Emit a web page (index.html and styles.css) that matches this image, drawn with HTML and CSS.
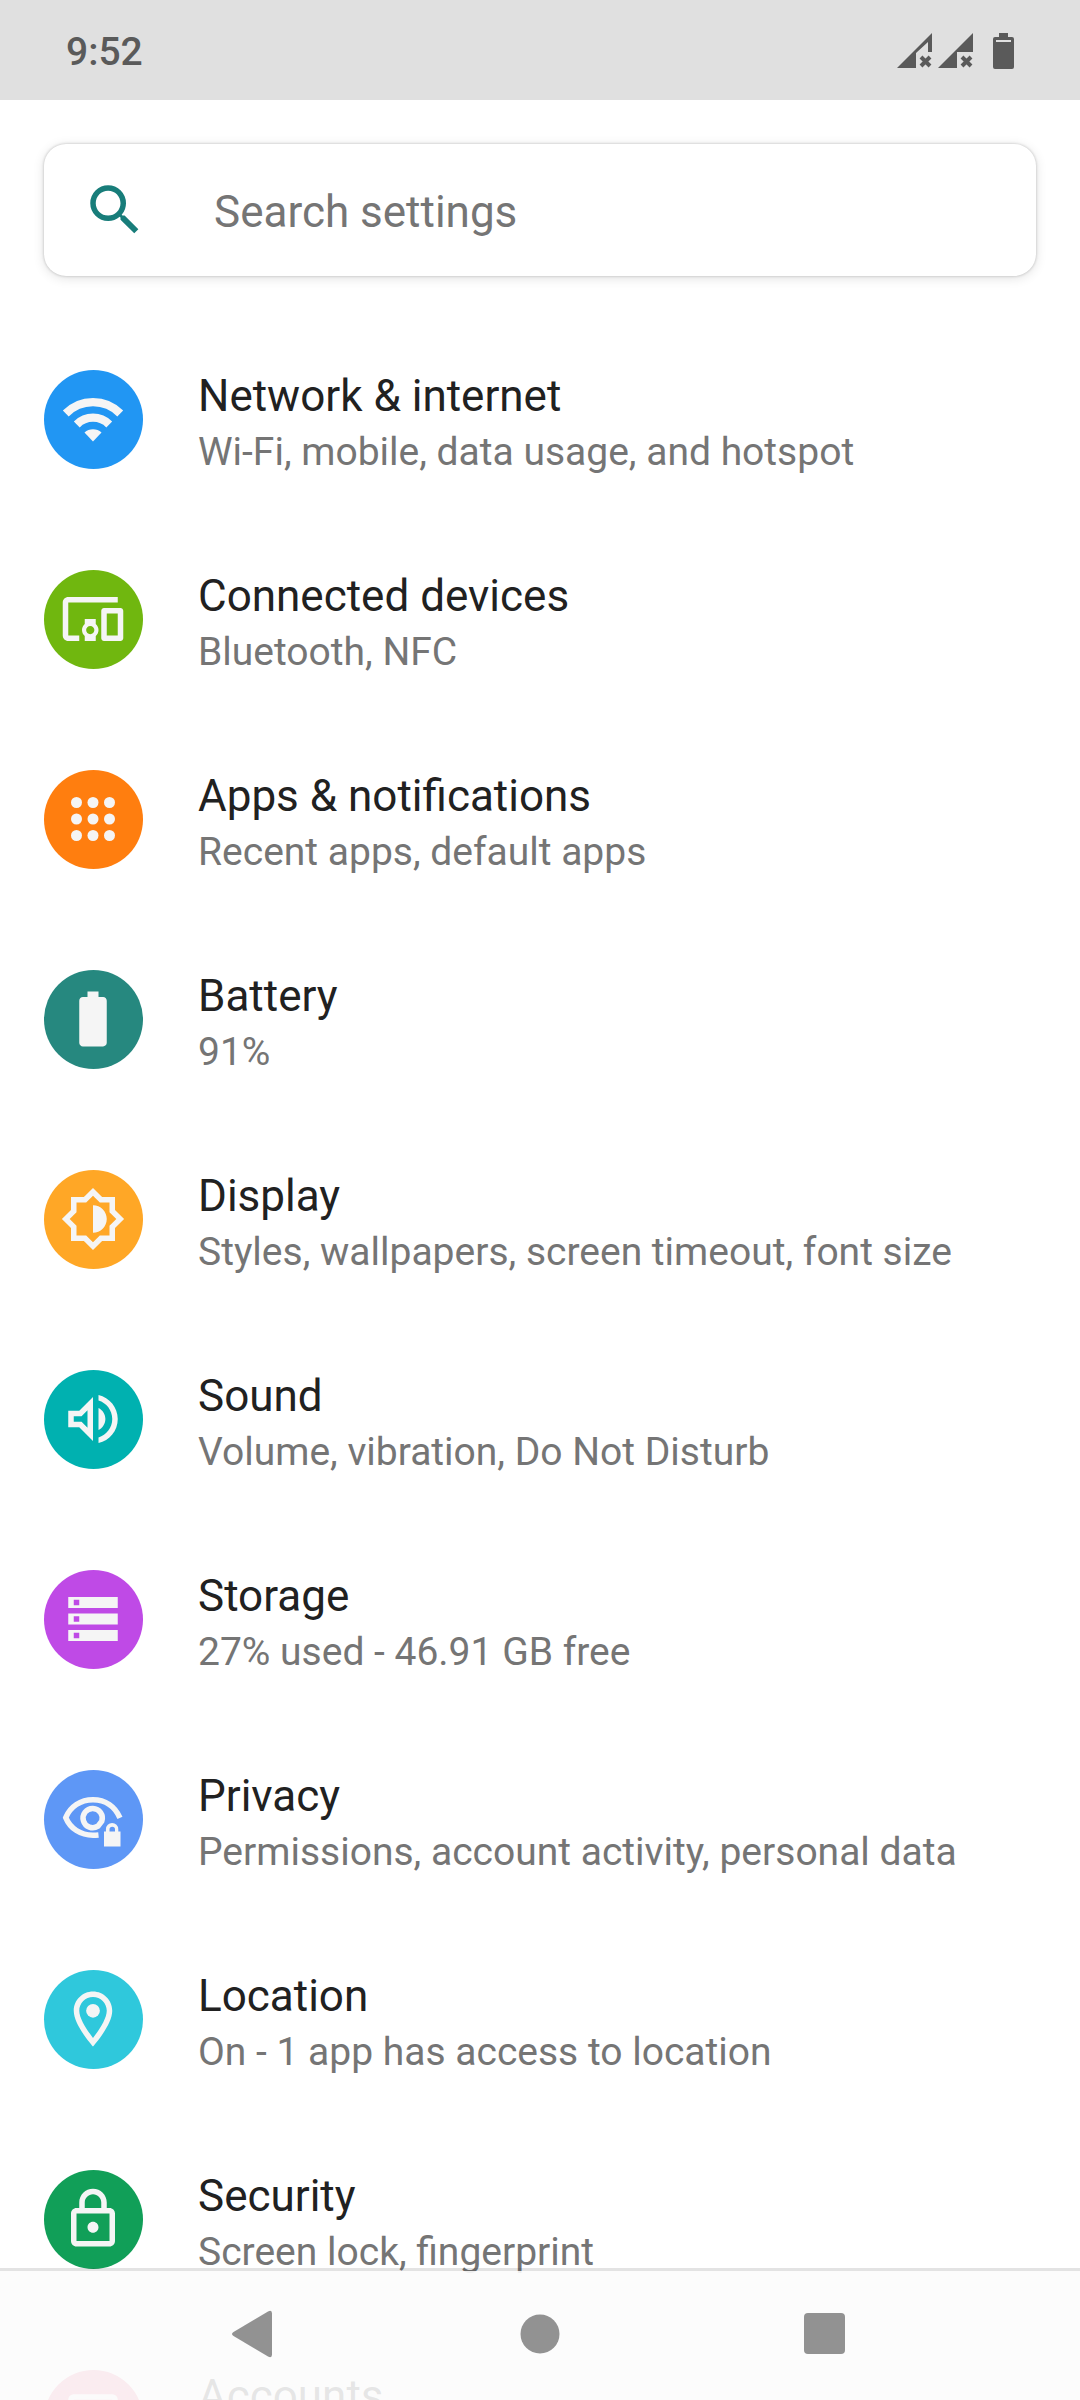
FILE: index.html
```html
<!DOCTYPE html>
<html lang="en">
<head>
<meta charset="utf-8">
<meta name="viewport" content="width=device-width, initial-scale=1">
<title>Settings</title>
<link rel="stylesheet" href="styles.css">
</head>
<body>
<div class="screen">
  <header class="status-bar">
    <span class="clock">9:52</span>
    <svg class="status-icons" viewBox="0 0 118 38" aria-hidden="true">
      <path d="M0 35 35 0V19H31V9L19 20V35Z"/>
      <path d="M41 35 76 0V19H60V35Z"/>
      <path class="cross" d="m24 24 9 9m0-9-9 9M65 24l9 9m0-9-9 9"/>
      <path fill-rule="evenodd" d="M102 0h9v4h4q2 0 2 2v28q0 2-2 2H98q-2 0-2-2V6q0-2 2-2h4ZM99 7v2h15V7Z"/>
    </svg>
  </header>

  <main class="content">
    <label class="search">
      <svg class="glyph search-glyph" viewBox="0 0 24 24" aria-hidden="true"><path d="M15.5 14h-.79l-.28-.27A6.471 6.471 0 0 0 16 9.5 6.5 6.5 0 1 0 9.5 16c1.61 0 3.09-.59 4.23-1.57l.27.28v.79l5 4.99L20.49 19l-4.99-5zm-6 0C7.01 14 5 11.99 5 9.5S7.01 5 9.5 5 14 7.01 14 9.5 11.99 14 9.5 14z"/></svg>
      <input class="search-input" type="text" placeholder="Search settings" aria-label="Search settings">
    </label>

    <nav class="list" aria-label="Settings">
      <a class="row" href="#network">
        <span class="badge network"><svg class="glyph" viewBox="0 0 24 24"><path class="line wide" d="M2.100 10a13.900 13.900 0 0 1 19.800 0M6.100 14a8.300 8.300 0 0 1 11.800 0"/><path d="m12 20.200-3.100-3.300a4.700 4.700 0 0 1 6.200 0Z"/></svg></span>
        <span class="text"><span class="title">Network &amp; internet</span><span class="summary">Wi-Fi, mobile, data usage, and hotspot</span></span>
      </a>
      <a class="row" href="#devices">
        <span class="badge devices"><svg class="glyph" viewBox="0 0 24 24"><path d="M3 6h18V4H3c-1.100 0-2 .9-2 2v12c0 1.100.9 2 2 2h4v-2H3V6zm10 6H9v1.780c-.61.55-1 1.330-1 2.220s.39 1.670 1 2.220V20h4v-1.780c.61-.55 1-1.340 1-2.220s-.39-1.670-1-2.220V12zm-2 5.500c-.83 0-1.500-.67-1.500-1.500s.67-1.500 1.500-1.500 1.500.67 1.500 1.500-.67 1.500-1.500 1.500zM22 8h-6c-.5 0-1 .5-1 1v10c0 .5.5 1 1 1h6c.5 0 1-.5 1-1V9c0-.5-.5-1-1-1zm-1 10h-4v-8h4v8z"/></svg></span>
        <span class="text"><span class="title">Connected devices</span><span class="summary">Bluetooth, NFC</span></span>
      </a>
      <a class="row" href="#apps">
        <span class="badge apps"><svg class="glyph" viewBox="0 0 24 24"><circle cx="6" cy="6" r="2"/><circle cx="12" cy="6" r="2"/><circle cx="18" cy="6" r="2"/><circle cx="6" cy="12" r="2"/><circle cx="12" cy="12" r="2"/><circle cx="18" cy="12" r="2"/><circle cx="6" cy="18" r="2"/><circle cx="12" cy="18" r="2"/><circle cx="18" cy="18" r="2"/></svg></span>
        <span class="text"><span class="title">Apps &amp; notifications</span><span class="summary">Recent apps, default apps</span></span>
      </a>
      <a class="row" href="#battery">
        <span class="badge battery"><svg class="glyph" viewBox="0 0 24 24"><path d="M15.670 4H14V2h-4v2H8.330C7.600 4 7 4.600 7 5.330v15.330C7 21.400 7.600 22 8.330 22h7.330c.74 0 1.340-.6 1.340-1.330V5.330C17 4.600 16.400 4 15.670 4z"/></svg></span>
        <span class="text"><span class="title">Battery</span><span class="summary">91%</span></span>
      </a>
      <a class="row" href="#display">
        <span class="badge display"><svg class="glyph" viewBox="0 0 24 24"><path d="M20 15.310 23.310 12 20 8.690V4h-4.690L12 .69 8.690 4H4v4.690L.69 12 4 15.310V20h4.690L12 23.310 15.310 20H20v-4.690zm-2-.83V18h-3.520L12 20.480 9.520 18H6v-3.520L3.520 12 6 9.520V6h3.520L12 3.520 14.480 6H18v3.520L20.480 12 18 14.480zM12 7v10c2.760 0 5-2.240 5-5s-2.240-5-5-5z"/></svg></span>
        <span class="text"><span class="title">Display</span><span class="summary">Styles, wallpapers, screen timeout, font size</span></span>
      </a>
      <a class="row" href="#sound">
        <span class="badge sound"><svg class="glyph" viewBox="0 0 24 24"><path d="M3 9v6h4l5 5V4L7 9H3zm7-.17v6.340L7.830 13H5v-2h2.830L10 8.830zM14 7.970v8.050c1.480-.73 2.500-2.250 2.500-4.020 0-1.770-1.020-3.290-2.500-4.030zM14 3.230v2.060c2.890.86 5 3.540 5 6.710s-2.110 5.850-5 6.710v2.060c4.010-.91 7-4.490 7-8.770s-2.990-7.860-7-8.770z"/></svg></span>
        <span class="text"><span class="title">Sound</span><span class="summary">Volume, vibration, Do Not Disturb</span></span>
      </a>
      <a class="row" href="#storage">
        <span class="badge storage"><svg class="glyph" viewBox="0 0 24 24"><path fill-rule="evenodd" d="M3 4h18v4H3zM3 10h18v4H3zM3 16h18v4H3zM5 5v2h2V5zM5 11v2h2v-2zM5 17v2h2v-2z"/></svg></span>
        <span class="text"><span class="title">Storage</span><span class="summary">27% used - 46.91 GB free</span></span>
      </a>
      <a class="row" href="#privacy">
        <span class="badge privacy"><svg class="glyph" viewBox="0 0 24 24"><path class="line" d="M21.800 11.600C20 7.500 16.500 5 12 5 7.500 5 3.700 7.500 2.100 11.500 3.700 15.500 7.500 17.900 12 17.900q1 0 2-.1"/><path class="line" d="M13.800 14.600A3.500 3.500 0 1 1 15.200 12.800Z"/><path fill-rule="evenodd" d="M16 16.500h.7v-.8a2.200 2.200 0 0 1 4.500 0v.8h.8V22h-6zM18 16.500h2v-.7a1 1 0 0 0-2 0z"/></svg></span>
        <span class="text"><span class="title">Privacy</span><span class="summary">Permissions, account activity, personal data</span></span>
      </a>
      <a class="row" href="#location">
        <span class="badge location"><svg class="glyph" viewBox="0 0 24 24"><path d="M12 2C8.130 2 5 5.130 5 9c0 5.250 7 13 7 13s7-7.750 7-13c0-3.870-3.130-7-7-7zM7 9c0-2.760 2.240-5 5-5s5 2.240 5 5c0 2.880-2.880 7.190-5 9.880C9.920 16.210 7 11.850 7 9z"/><circle cx="12" cy="9" r="2.500"/></svg></span>
        <span class="text"><span class="title">Location</span><span class="summary">On - 1 app has access to location</span></span>
      </a>
      <a class="row" href="#security">
        <span class="badge security"><svg class="glyph" viewBox="0 0 24 24"><path d="M18 8h-1V6c0-2.760-2.240-5-5-5S7 3.240 7 6v2H6c-1.100 0-2 .9-2 2v10c0 1.100.9 2 2 2h12c1.100 0 2-.9 2-2V10c0-1.100-.9-2-2-2zM9 6c0-1.660 1.340-3 3-3s3 1.340 3 3v2H9V6zm9 14H6V10h12v10zm-6-3c1.100 0 2-.9 2-2s-.9-2-2-2-2 .9-2 2 .9 2 2 2z"/></svg></span>
        <span class="text"><span class="title">Security</span><span class="summary">Screen lock, fingerprint</span></span>
      </a>
      <a class="row" href="#accounts">
        <span class="badge accounts"><svg class="glyph" viewBox="0 0 24 24"><path fill-rule="evenodd" d="M5 3h14a2 2 0 0 1 2 2v14a2 2 0 0 1-2 2H5a2 2 0 0 1-2-2V5a2 2 0 0 1 2-2zM5 5v14h14V5z"/><circle cx="12" cy="10" r="3"/></svg></span>
        <span class="text"><span class="title">Accounts</span></span>
      </a>
    </nav>
  </main>

  <footer class="nav-bar">
    <button class="nav-button" type="button" aria-label="Back"><svg class="nav-glyph" viewBox="0 0 48 48"><path d="M2.500 22 37 1.500q4-2 4 2v41q0 4-4 2L2.500 26q-3-2 0-4z"/></svg></button>
    <button class="nav-button" type="button" aria-label="Home"><svg class="nav-glyph" viewBox="0 0 48 48"><circle cx="24" cy="24" r="19.500"/></svg></button>
    <button class="nav-button" type="button" aria-label="Recent apps"><svg class="nav-glyph" viewBox="0 0 48 48"><rect x="3" y="3" width="41" height="41" rx="4"/></svg></button>
  </footer>
</div>
</body>
</html>
```
FILE: styles.css
```css
* {
  box-sizing: border-box;
}

body {
  margin: 0;
  background: #fff;
  color: #212121;
  font-family: Roboto, "Noto Sans", sans-serif;
}

.screen {
  display: flex;
  flex-direction: column;
  height: 100vh;
  overflow: hidden;
}

.status-bar {
  display: flex;
  flex: none;
  align-items: center;
  justify-content: space-between;
  height: 100px;
  padding: 3px 65px 0 66px;
  background: #e0e0e0;
}

.clock {
  color: #5a5a5a;
  font-size: 39px;
  font-weight: 500;
  line-height: 46px;
}

.status-icons {
  width: 118px;
  height: 38px;
  fill: #5a5a5a;
}

.cross {
  fill: none;
  stroke: #5a5a5a;
  stroke-width: 4;
}

.content {
  flex: 1;
  min-height: 0;
  padding-top: 44px;
}

.search {
  display: flex;
  align-items: center;
  gap: 66px;
  height: 132px;
  margin: 0 44px 44px;
  padding: 0 38px;
  border-radius: 22px;
  background: #fff;
  box-shadow: 0 0 3px rgba(0, 0, 0, 0.24), 0 2px 12px rgba(0, 0, 0, 0.12);
}

.search-input {
  flex: 1;
  min-width: 0;
  padding: 4px 0 0;
  border: 0;
  outline: 0;
  background: none;
  color: #757575;
  font: 44px/52px Roboto, "Noto Sans", sans-serif;
}

.search-input::placeholder {
  color: #757575;
  opacity: 1;
}

.glyph {
  display: block;
  flex: none;
  width: 66px;
  height: 66px;
  fill: #f5f5f5;
}

.search-glyph {
  fill: #187d7a;
}

.line {
  fill: none;
  stroke: #f5f5f5;
  stroke-width: 2;
}

.wide {
  stroke-width: 3;
}

.row {
  display: flex;
  align-items: flex-start;
  gap: 55px;
  height: 200px;
  padding: 50px 44px 0;
  color: inherit;
  text-decoration: none;
}

.badge {
  display: grid;
  flex: none;
  place-items: center;
  width: 99px;
  height: 99px;
  padding: 0 1px 1px 0;
  border-radius: 50%;
}

.text {
  display: flex;
  flex-direction: column;
  gap: 7px;
  min-width: 0;
}

.title {
  font-size: 44px;
  line-height: 52px;
}

.summary {
  color: #757575;
  font-size: 39px;
  line-height: 46px;
}

.network { background: #2196f3; }
.devices { background: #70b70f; }
.apps { background: #ff7e0f; }
.battery { background: #26887f; }
.display { background: #ffa726; }
.sound { background: #00b1b0; }
.storage { background: #bf4ae6; }
.privacy { background: #5e97f6; }
.location { background: #2fc8dc; }
.security { background: #119f58; }
.accounts { background: #e85a80; }

.nav-bar {
  position: fixed;
  right: 0;
  bottom: 0;
  left: 0;
  display: flex;
  justify-content: center;
  height: 132px;
  padding-bottom: 3px;
  border-top: 3px solid rgba(0, 0, 0, 0.11);
  background: rgba(252, 252, 252, 0.9);
  background-clip: padding-box;
}

.nav-button {
  display: grid;
  place-items: center;
  width: 285px;
  padding: 0;
  border: 0;
  background: none;
}

.nav-glyph {
  display: block;
  width: 48px;
  height: 48px;
  fill: #929292;
}
```
